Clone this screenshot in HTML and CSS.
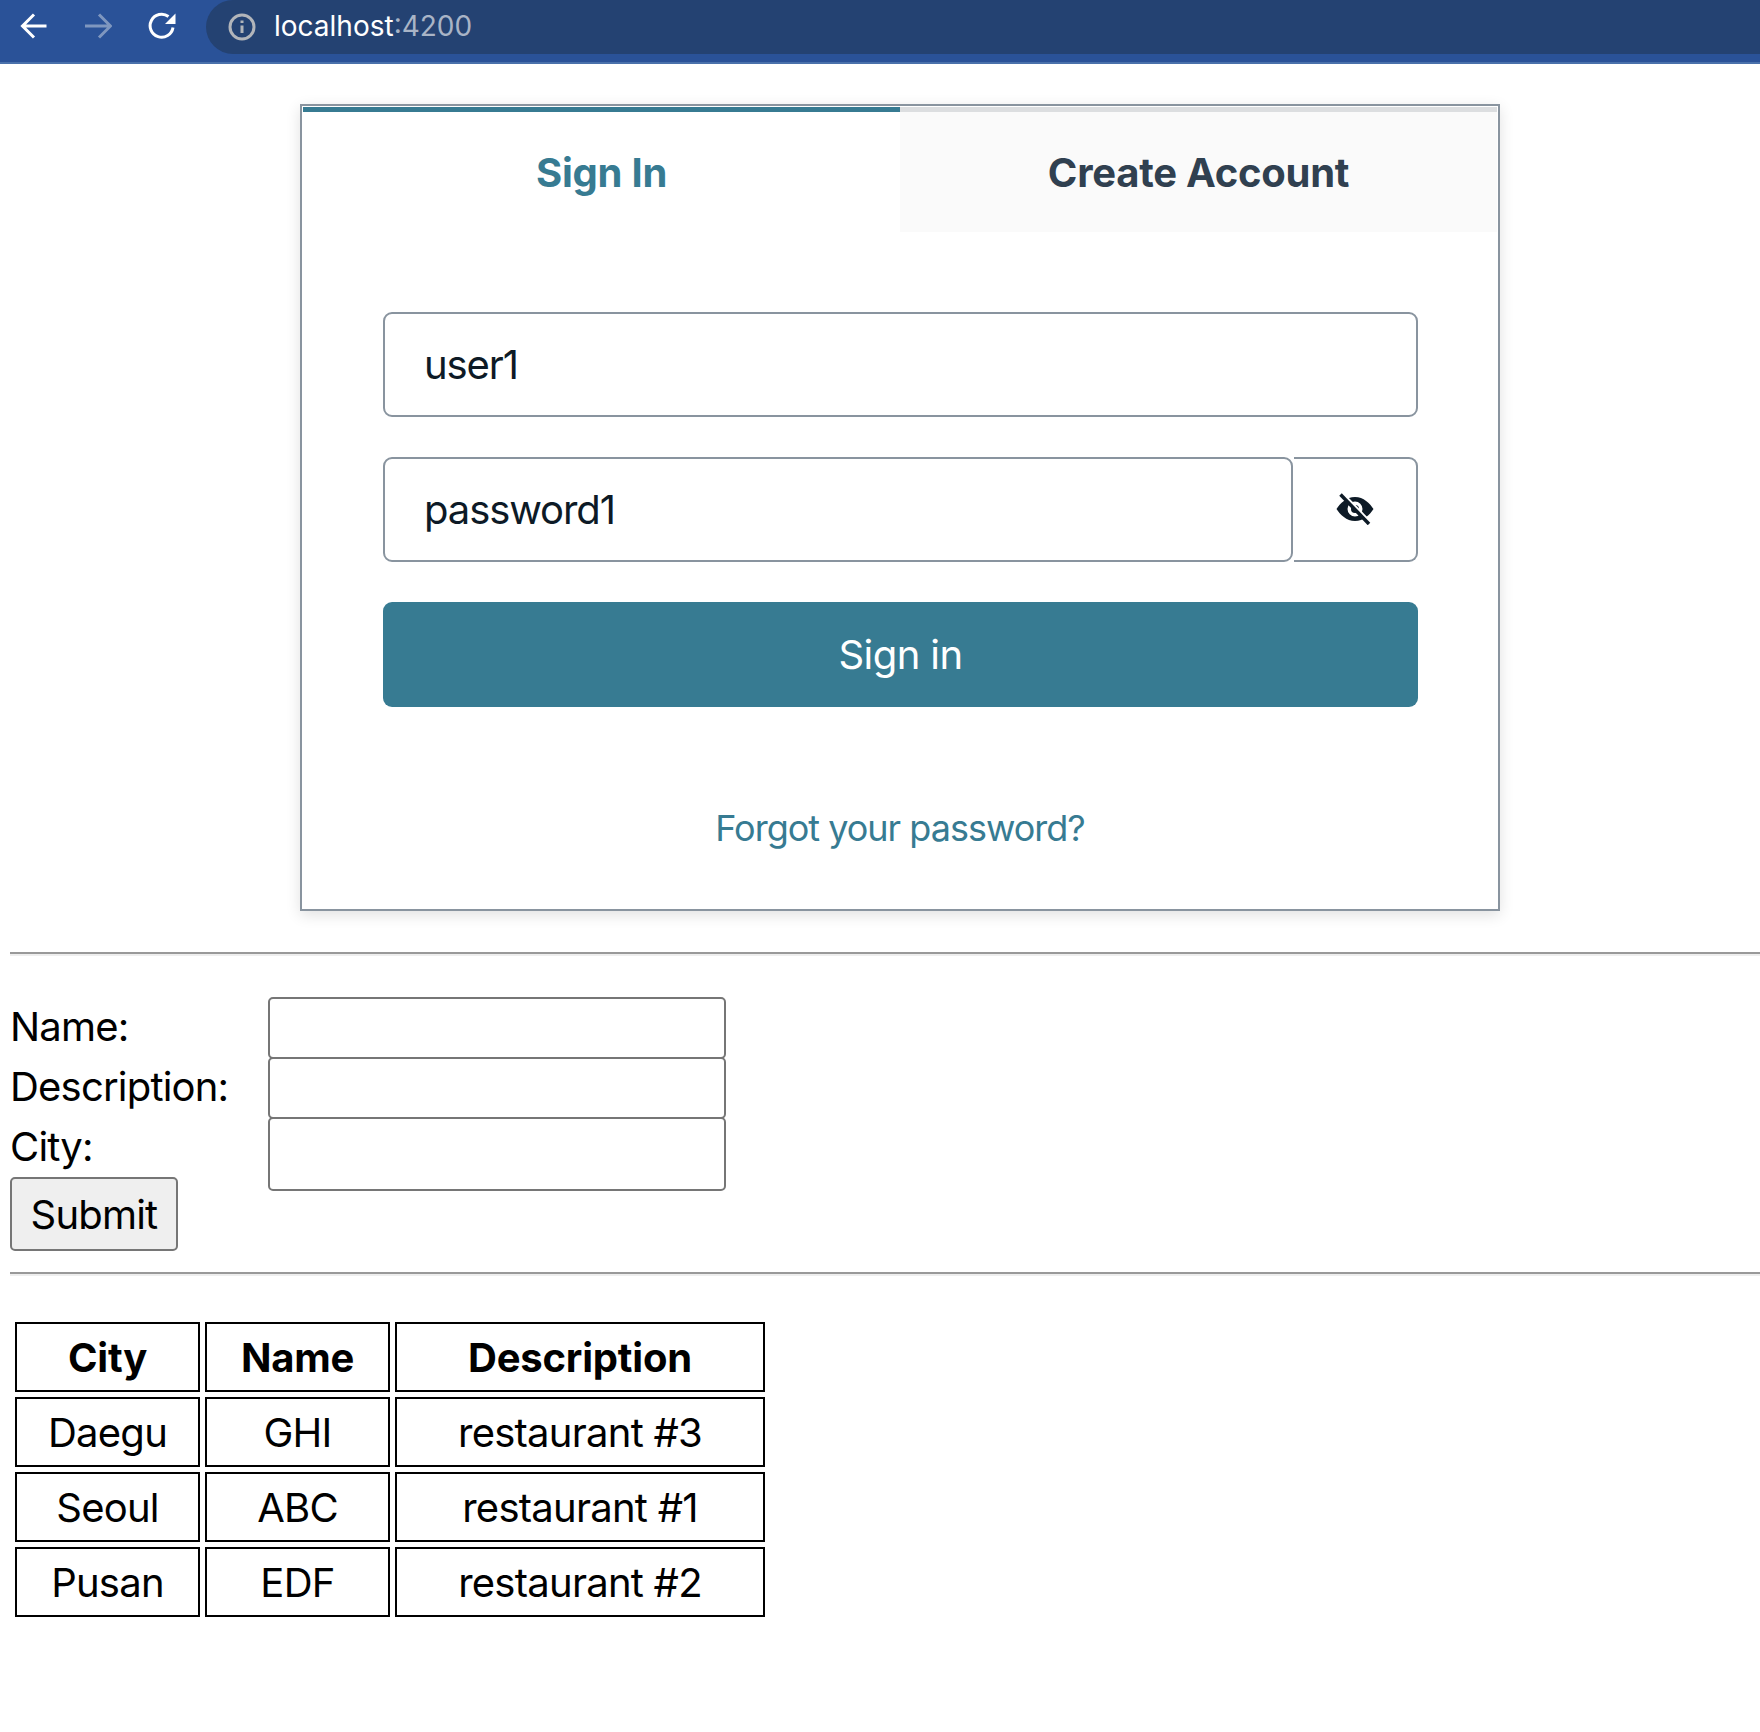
FILE: index.html
```html
<!DOCTYPE html>
<html lang="en">
<head>
  <meta charset="UTF-8">
  <title>localhost:4200</title>
  <link rel="stylesheet" href="styles.css">
</head>
<body>

<div class="toolbar">
  <div class="nav-icons">
    <svg class="nav-icon" viewBox="0 0 28 28"><path d="M26.500 14H3M14 2.500 2.500 14 14 25.500"/></svg>
    <svg class="nav-icon dim" viewBox="0 0 28 28"><path d="M1 14h24M15 2.500 26.500 14 15 25.500"/></svg>
    <svg class="nav-icon" viewBox="0 0 28 28"><path d="M25 15.500A11.500 11.500 0 1 1 20.500 4.500"/><path class="solid" d="M27.500 1.500v10.500H17z"/></svg>
  </div>
  <div class="address">
    <svg class="info-icon" viewBox="0 0 28 28"><circle cx="14" cy="14" r="12"/><path d="M14 12.500V20M14 7.500v2.600"/></svg>
    <span class="host">localhost</span><span class="port">:4200</span>
  </div>
</div>

<div class="card">
  <div class="tabs">
    <div class="tab active">Sign In</div>
    <div class="tab">Create Account</div>
  </div>
  <form class="signin">
    <input class="field" type="text" value="user1">
    <div class="password-row">
      <input class="field password" type="text" value="password1">
      <button class="eye" type="button">
        <svg viewBox="0 0 40 32">
          <path class="eye-shape" fill-rule="evenodd" d="M20 4C11.500 4 5 10.500 1.500 16 5 21.500 11.500 28 20 28s15-6.500 18.500-12C35 10.500 28.500 4 20 4zm0 4.500a7.500 7.500 0 1 1 0 15 7.500 7.500 0 0 1 0-15z"/>
          <circle class="eye-shape" cx="20" cy="16" r="4"/>
          <path class="eye-gap" d="M8 1 35 29"/>
          <path class="eye-slash" d="M5.500 1.500 34 31"/>
        </svg>
      </button>
    </div>
    <button class="submit" type="button">Sign in</button>
  </form>
  <div class="forgot">Forgot your password?</div>
</div>

<hr class="rule first">

<form class="restaurant">
  <div class="labels">
    <label class="line">Name:</label>
    <label class="line">Description:</label>
    <label class="line">City:</label>
    <button class="plain-btn" type="button">Submit</button>
  </div>
  <div class="inputs">
    <input class="plain" type="text">
    <input class="plain" type="text">
    <input class="plain last" type="text">
  </div>
</form>

<hr class="rule">

<table class="list">
  <tr><th class="col-a">City</th><th class="col-a">Name</th><th class="col-b">Description</th></tr>
  <tr><td>Daegu</td><td>GHI</td><td>restaurant #3</td></tr>
  <tr><td>Seoul</td><td>ABC</td><td>restaurant #1</td></tr>
  <tr><td>Pusan</td><td>EDF</td><td>restaurant #2</td></tr>
</table>

</body>
</html>
```

FILE: styles.css
```css
* {
  box-sizing: border-box;
}
body {
  margin: 0;
  font-family: Inter, 'Liberation Sans', sans-serif;
  background: white;
  color: black;
  overflow-x: hidden;
}

/* browser bar */
.toolbar {
  height: 64px;
  background: #2a5298;
  border-bottom: 2px solid #4a71ab;
  display: flex;
  align-items: flex-start;
}
.nav-icons {
  width: 206px;
  height: 51px;
  padding-left: 20px;
  display: flex;
  align-items: center;
  gap: 36px;
}
.nav-icon {
  width: 28px;
  height: 28px;
  fill: none;
  stroke: white;
  stroke-width: 3;
}
.nav-icon.dim {
  stroke: #7f97bf;
}
.nav-icon .solid {
  fill: white;
  stroke: none;
}
.address {
  flex: 1;
  height: 54px;
  background: #244272;
  border-radius: 27px 0 0 27px;
  padding-left: 22px;
  display: flex;
  align-items: center;
  font-size: 28px;
}
.info-icon {
  width: 28px;
  height: 28px;
  margin-right: 18px;
  fill: none;
  stroke: #b2b5ba;
  stroke-width: 3;
}
.host {
  color: white;
  margin-bottom: 2px;
}
.port {
  color: #a9b4c6;
  margin-bottom: 2px;
}

/* login card */
.card {
  width: 1200px;
  height: 807px;
  margin: 40px auto 0 300px;
  border: 2px solid #89949f;
  padding: 1px;
  box-shadow: 0 4px 14px rgba(0, 0, 0, 0.12);
}
.tabs {
  display: flex;
}
.tab {
  flex: 1;
  height: 125px;
  border-top: 5px solid #dcdee0;
  background: #fafafa;
  color: #304050;
  font-size: 40px;
  font-weight: 700;
  letter-spacing: -0.25px;
  display: flex;
  align-items: center;
  justify-content: center;
}
.tab.active {
  border-top-color: #377b92;
  background: white;
  color: #377b92;
}
.signin {
  padding: 80px 79px 0 80px;
}
.field {
  display: block;
  width: 100%;
  height: 105px;
  padding: 0 39px;
  border: 2px solid #89949f;
  border-radius: 9px;
  font-family: inherit;
  font-size: 40px;
  letter-spacing: -1.1px;
  color: #0d1a26;
  outline: none;
}
.password-row {
  display: flex;
  gap: 1px;
  margin-top: 40px;
}
.password {
  flex: 1;
}
.eye {
  width: 124px;
  height: 105px;
  background: white;
  border: 2px solid #89949f;
  border-left: none;
  border-radius: 0 9px 9px 0;
  padding: 0 0 2px;
  display: flex;
  align-items: center;
  justify-content: center;
}
.eye svg {
  width: 40px;
  height: 32px;
}
.eye-shape {
  fill: #0d1a26;
}
.eye-gap {
  fill: none;
  stroke: white;
  stroke-width: 3;
}
.eye-slash {
  fill: none;
  stroke: #0d1a26;
  stroke-width: 3.500;
}
.submit {
  display: block;
  width: 100%;
  height: 105px;
  margin-top: 40px;
  background: #377b92;
  border: none;
  border-radius: 9px;
  color: white;
  font-family: inherit;
  font-size: 40px;
  letter-spacing: -0.6px;
}
.forgot {
  margin-top: 99px;
  text-align: center;
  font-size: 36px;
  letter-spacing: -1px;
  color: #377b92;
}

/* plain form and table */
.rule {
  height: 4px;
  margin: 41px 0 0 10px;
  border: none;
  border-top: 2px solid #999;
  border-bottom: 2px solid #eee;
}
.rule.first + .restaurant {
  margin-top: 41px;
}
.restaurant {
  margin-left: 10px;
  display: flex;
  height: 234px;
}
.rule + .list {
  margin-top: 41px;
}
.labels {
  width: 258px;
}
.line {
  display: block;
  height: 60px;
  line-height: 60px;
  font-size: 40px;
  letter-spacing: -0.8px;
}
.plain-btn {
  display: block;
  width: 168px;
  height: 74px;
  background: #efefef;
  border: 2px solid #767676;
  border-radius: 5px;
  font-family: inherit;
  font-size: 40px;
  letter-spacing: -0.8px;
  color: black;
  padding: 0;
}
.inputs {
  width: 458px;
}
.plain {
  display: block;
  width: 100%;
  height: 62px;
  margin-bottom: -2px;
  background: white;
  border: 2px solid #767676;
  border-radius: 5px;
}
.plain.last {
  height: 74px;
}
.list {
  margin-left: 10px;
  border-spacing: 5px;
  border-collapse: separate;
  font-size: 40px;
  letter-spacing: -0.75px;
  table-layout: fixed;
}
.list th, .list td {
  height: 70px;
  padding: 0;
  border: 2px solid black;
  text-align: center;
}
.list th {
  letter-spacing: -0.2px;
}
.list .col-a {
  width: 185px;
}
.list .col-b {
  width: 370px;
}
```
